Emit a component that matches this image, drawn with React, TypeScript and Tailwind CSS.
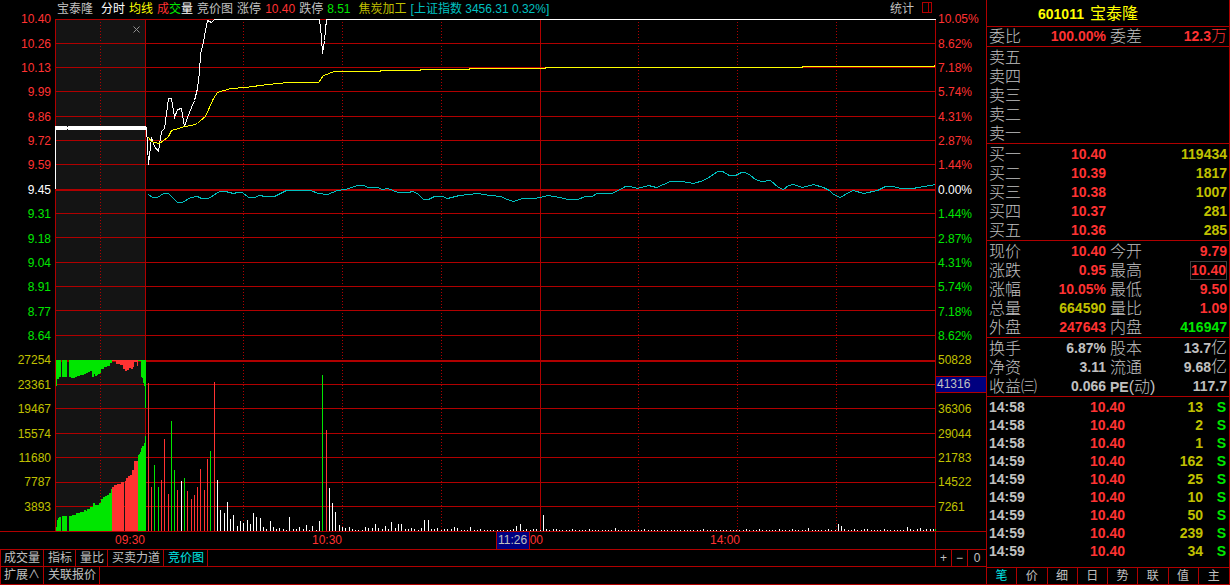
import React, { useState } from 'react';
import clsx from 'clsx';

type Point = [number, number];
type Bar = [number, number, string?];

const RED = '#ff3232';
const GREEN = '#00e600';
const LINE = '#b00000';

const LEFT_PRICES = ['10.40', '10.26', '10.13', '9.99', '9.86', '9.72', '9.59', '9.45', '9.31', '9.18', '9.04', '8.91', '8.77', '8.64'];
const LEFT_VOLUMES = ['27254', '23361', '19467', '15574', '11680', '7787', '3893'];
const RIGHT_PERCENTS = ['10.05%', '8.62%', '7.18%', '5.74%', '4.31%', '2.87%', '1.44%', '0.00%', '1.44%', '2.87%', '4.31%', '5.74%', '7.18%', '8.62%'];
const RIGHT_VOLUMES = ['50828', '41316', '36306', '29044', '21783', '14522', '7261'];

const GRID_Y = [19, 43, 67, 91, 116, 140, 164, 213, 237, 262, 286, 310, 335, 384, 408, 433, 457, 482, 506];
const DOTTED_X = [100, 243, 342, 441, 638, 737, 836];

const PRICE: Point[] = [
  [146, 127], [148, 164], [151, 137], [154, 146], [158, 151], [161, 131], [164, 128], [166, 113], [168, 98], [171, 98],
  [174, 117], [177, 109], [181, 108], [184, 126], [187, 117], [191, 107], [194, 100], [197, 88], [199, 72], [200, 53],
  [203, 42], [205, 30], [207, 20], [211, 22], [214, 19], [319, 19], [321, 37], [322, 53], [324, 40], [326, 19], [935, 19],
];

const AVERAGE: Point[] = [
  [148, 137], [151, 141], [158, 143], [162, 141], [168, 136], [171, 130], [178, 128], [184, 126], [191, 125], [197, 123],
  [200, 120], [205, 116], [213, 98], [217, 92], [230, 88], [245, 87], [267, 84], [288, 82], [318, 82], [323, 75],
  [334, 71], [380, 71], [380, 70], [420, 70], [420, 69], [469, 69], [469, 68], [545, 68], [545, 67], [802, 67],
  [802, 66], [933, 66], [935, 65],
];

const INDEX: Point[] = [
  [148, 194], [152, 197], [157, 197], [163, 193], [168, 193], [177, 202], [182, 202], [190, 197], [197, 196], [201, 198],
  [208, 198], [219, 191], [225, 191], [233, 193], [237, 192], [242, 192], [248, 197], [254, 197], [259, 195], [265, 196],
  [274, 196], [286, 190], [310, 190], [318, 193], [327, 194], [337, 190], [345, 189], [357, 185], [363, 185], [368, 187],
  [377, 187], [382, 189], [387, 188], [398, 192], [408, 192], [412, 191], [417, 193], [423, 199], [428, 199], [434, 196],
  [442, 196], [447, 198], [459, 195], [477, 193], [490, 195], [500, 196], [507, 199], [513, 201], [522, 198], [533, 198],
  [540, 197], [547, 195], [560, 197], [567, 199], [577, 199], [585, 196], [592, 196], [596, 193], [611, 193], [618, 190],
  [625, 186], [630, 186], [637, 188], [648, 185], [656, 187], [670, 181], [682, 181], [693, 183], [703, 180], [710, 176],
  [717, 171], [722, 171], [729, 175], [735, 175], [741, 172], [745, 172], [750, 175], [755, 179], [761, 181], [770, 180],
  [778, 187], [783, 189], [788, 185], [793, 184], [802, 187], [813, 184], [823, 187], [829, 190], [833, 194], [840, 197],
  [848, 192], [853, 190], [863, 193], [877, 190], [885, 186], [893, 186], [900, 188], [912, 188], [930, 185], [935, 184],
];

// Call auction steps: [x, edge y]. A step runs to the next x; edge 0 leaves a gap.
const UNMATCHED: Point[] = [
  [56, 386], [57, 379], [59, 377], [61, 0], [62, 377], [67, 0], [69, 377], [71, 378], [75, 377], [77, 376], [80, 375],
  [84, 374], [86, 373], [88, 372], [90, 371], [92, 377], [94, 374], [95, 376], [97, 375], [98, 374], [100, 373],
  [101, 369], [104, 367], [107, 366], [110, 363], [112, 361], [116, 364], [120, 365], [123, 369], [125, 371], [127, 370],
  [129, 368], [131, 369], [133, 367], [134, 362], [137, 366], [138, 361], [141, 377], [142, 378], [143, 383], [144, 386],
  [145, 408], [146, 0],
];
const MATCHED: Point[] = [
  [56, 527], [57, 520], [58, 518], [59, 517], [61, 0], [62, 516], [67, 0], [69, 516], [72, 515], [76, 513], [80, 512],
  [84, 510], [86, 511], [87, 509], [90, 507], [93, 503], [95, 505], [99, 503], [101, 499], [103, 497], [105, 496],
  [107, 495], [109, 493], [111, 489], [112, 487], [114, 485], [117, 484], [121, 482], [124, 0], [125, 481], [126, 478],
  [128, 476], [130, 475], [132, 470], [134, 461], [138, 455], [139, 454], [140, 452], [141, 448], [142, 446], [144, 443],
  [145, 436], [146, 0],
];

const VOLUME: Bar[] = [
  [148, 383, RED], [151, 487, RED], [154, 465, GREEN], [158, 487, GREEN], [161, 480, RED], [164, 439, RED], [168, 494, RED],
  [171, 421, GREEN], [174, 470, GREEN], [177, 490, RED], [181, 481], [184, 478, GREEN], [187, 491, RED], [191, 499, RED],
  [194, 495, RED], [197, 487, RED], [200, 469, RED], [204, 490, RED], [207, 459, RED], [210, 451, GREEN], [214, 382, RED],
  [217, 480], [220, 510], [224, 513], [227, 502], [230, 519], [233, 515], [237, 526], [240, 521], [243, 523], [247, 520],
  [250, 524], [253, 513], [256, 517], [260, 518], [263, 527], [266, 529], [270, 521], [273, 527], [276, 529], [279, 528],
  [283, 529], [286, 530], [289, 517], [293, 529], [296, 529], [299, 527], [303, 529], [306, 525], [309, 530], [312, 526],
  [316, 530], [319, 521], [322, 375, GREEN], [326, 430, RED], [329, 488], [332, 503], [335, 512], [339, 525], [342, 527],
  [345, 528], [349, 527], [352, 529], [355, 530], [358, 530], [362, 530], [365, 527], [368, 528], [372, 528], [375, 524],
  [378, 528], [382, 529], [385, 526], [388, 529], [391, 522], [395, 528], [398, 524], [401, 524], [405, 529], [408, 529],
  [411, 528], [414, 529], [418, 530], [421, 528], [424, 520], [428, 520], [431, 529], [434, 529], [437, 528], [441, 530],
  [444, 529], [447, 529], [451, 529], [454, 527], [457, 528], [461, 530], [464, 530], [467, 530], [470, 527], [474, 530],
  [477, 530], [480, 529], [484, 530], [487, 530], [490, 530], [493, 530], [497, 530], [500, 530], [503, 530], [507, 530],
  [510, 530], [513, 529], [516, 526], [520, 524], [523, 530], [526, 529], [530, 530], [533, 529], [536, 529], [540, 530],
  [543, 515], [546, 529], [549, 530], [553, 529], [556, 529],
];

// Quiet afternoon: one unit bars with a few taller minutes.
const TALLER: Record<number, number> = {
  4: 529, 9: 529, 17: 528, 26: 529, 44: 529, 57: 529, 61: 529, 67: 529, 71: 529, 76: 528, 82: 529, 85: 524, 86: 526, 87: 529,
  90: 529, 93: 529, 94: 529, 99: 529, 106: 527, 107: 529, 109: 529, 110: 528, 112: 529, 113: 529, 114: 529,
};
const AFTERNOON: Bar[] = Array.from({ length: 115 }, (_, i) => [Math.round(559 + i * 3.28), TALLER[i] ?? 530]);

const toPoints = (pts: Point[]) => pts.map(([x, y]) => `${x + 0.5},${y + 0.5}`).join(' ');
const auctionColor = (x: number) => (x >= 112 && x < 138 ? RED : GREEN);

function Chart() {
  return (
    <svg viewBox="55 19 881 512" preserveAspectRatio="none" shapeRendering="crispEdges" className="block h-[512px] w-full" aria-label="分时走势">
      <rect x="55" y="19" width="91" height="512" fill="#141414" />
      {DOTTED_X.map((x) => (
        <line key={x} x1={x + 0.5} x2={x + 0.5} y1="22" y2="531" stroke={LINE} strokeDasharray="1 2" />
      ))}
      {GRID_Y.map((y) => (
        <rect key={y} x="55" y={y} width="881" height="1" fill={LINE} />
      ))}
      <rect x="55" y="189" width="881" height="2" fill={LINE} />
      <rect x="55" y="360" width="881" height="2" fill={LINE} />
      {[55, 145, 540, 935].map((x) => (
        <rect key={x} x={x} y="19" width="1" height="512" fill={LINE} />
      ))}

      {/* Call auction */}
      {UNMATCHED.map(([x, y], i) =>
        y ? <rect key={x} x={x} y="360" width={UNMATCHED[i + 1][0] - x} height={y - 360} fill={auctionColor(x)} /> : null
      )}
      {MATCHED.map(([x, y], i) =>
        y ? <rect key={x} x={x} y={y} width={MATCHED[i + 1][0] - x} height={531 - y} fill={auctionColor(x)} /> : null
      )}
      <path d="M55 128h1v61h-1zM55 126h12v4H55zM67 127h1v2h-1zM68 126h78v4H68zM146 127h1v2h-1z" fill="#fff" />

      {/* Volume */}
      {[...VOLUME, ...AFTERNOON].map(([x, y, color]) => (
        <rect key={x} x={x} y={y} width="1" height={531 - y} fill={color ?? '#fff'} />
      ))}
      <rect x="935" y="529" width="1" height="2" fill={GREEN} />

      <polyline points={toPoints(INDEX)} fill="none" stroke="#00c0c0" />
      <polyline points={toPoints(PRICE)} fill="none" stroke="#fff" />
      <polyline points={toPoints(AVERAGE)} fill="none" stroke="#ffff00" />
    </svg>
  );
}

function priceColor(i: number) {
  if (i === 7) return 'text-white';
  return i < 7 ? 'text-[#ff3232]' : 'text-[#00e600]';
}

function Header() {
  return (
    <header className="flex h-[19px] items-start gap-1 whitespace-nowrap pl-[57px] pr-[53px] leading-[18px] text-[#c0c0c0]">
      <span>宝泰隆</span>
      <span className="ml-1 text-white">分时</span>
      <span className="text-[#ffff00]">均线</span>
      <span className="text-white">
        <span className="text-[#ff3232]">成</span>
        <span className="text-[#00e600]">交</span>量
      </span>
      <span>竞价图</span>
      <span>涨停</span>
      <span className="text-[#ff3232]">10.40</span>
      <span>跌停</span>
      <span className="text-[#00e600]">8.51</span>
      <span className="ml-1 text-[#c0c000]">焦炭加工</span>
      <span className="text-[#00c0c0]">[上证指数 3456.31 0.32%]</span>
      <button type="button" className="ml-auto mr-1">统计</button>
      <button type="button" aria-label="切换侧栏" className="pt-0.5">
        <svg className="block" width="11" height="11" viewBox="0 0 11 11" shapeRendering="crispEdges" fill="none" stroke={LINE}>
          <path d="M.5 .5h9v10h-9zM6.5 0v11" />
        </svg>
      </button>
    </header>
  );
}

function Unit({ children }: { children: React.ReactNode }) {
  return <span className="text-base font-light leading-none">{children}</span>;
}

type StatProps = { label: React.ReactNode; value: string; unit?: string; color?: string; boxed?: boolean };

function Stat({ label, value, unit, color = 'text-[#c0c0c0]', boxed }: StatProps) {
  return (
    <div className="flex h-[19px] items-center justify-between whitespace-nowrap leading-[19px]">
      <dt className="text-base font-light leading-[19px]">{label}</dt>
      <dd className={clsx('text-sm font-bold leading-[17px]', color, boxed && 'border border-[#404040]')}>
        {value}
        {unit && <Unit>{unit}</Unit>}
      </dd>
    </div>
  );
}

const red = 'text-[#ff3232]';
const green = 'text-[#00e600]';
const olive = 'text-[#c0c000]';

const QUOTE: StatProps[] = [
  { label: '现价', value: '10.40', color: red },
  { label: '今开', value: '9.79', color: red },
  { label: '涨跌', value: '0.95', color: red },
  { label: '最高', value: '10.40', color: red, boxed: true },
  { label: '涨幅', value: '10.05%', color: red },
  { label: '最低', value: '9.50', color: red },
  { label: '总量', value: '664590', color: olive },
  { label: '量比', value: '1.09', color: red },
  { label: '外盘', value: '247643', color: red },
  { label: '内盘', value: '416947', color: green },
];

const FINANCE: StatProps[] = [
  { label: '换手', value: '6.87%' },
  { label: '股本', value: '13.7', unit: '亿' },
  { label: '净资', value: '3.11' },
  { label: '流通', value: '9.68', unit: '亿' },
  { label: '收益㈢', value: '0.066' },
  { label: <><span className="text-sm font-bold">PE</span>(动)</>, value: '117.7' },
];

const SELLS = [['卖五', '', ''], ['卖四', '', ''], ['卖三', '', ''], ['卖二', '', ''], ['卖一', '', '']];
const BUYS = [
  ['买一', '10.40', '119434'],
  ['买二', '10.39', '1817'],
  ['买三', '10.38', '1007'],
  ['买四', '10.37', '281'],
  ['买五', '10.36', '285'],
];

const TICKS = [
  ['14:58', '13'], ['14:58', '2'], ['14:58', '1'], ['14:59', '162'], ['14:59', '25'],
  ['14:59', '10'], ['14:59', '50'], ['14:59', '239'], ['14:59', '34'],
];

function StatList({ items }: { items: StatProps[] }) {
  return (
    <dl className="grid grid-cols-2 gap-x-1 border-t border-[#b00000] px-0.5 pt-px">
      {items.map((item) => (
        <Stat key={item.value + item.color + String(item.boxed)} {...item} />
      ))}
    </dl>
  );
}

function OrderBook({ rows }: { rows: string[][] }) {
  return (
    <div className="border-t border-[#b00000] px-0.5 pt-px">
      <table className="w-full table-fixed">
        <tbody>
          {rows.map(([label, price, volume]) => (
            <tr key={label} className="h-[19px] text-sm font-bold leading-[19px]">
              <th scope="row" className="w-10 p-0 text-left text-base font-light leading-[19px]">{label}</th>
              <td className="w-[77px] p-0 text-right text-[#ff3232]">{price}</td>
              <td className="p-0 text-right text-[#c0c000]">{volume}</td>
            </tr>
          ))}
        </tbody>
      </table>
    </div>
  );
}

const PANEL_TABS = ['笔', '价', '细', '日', '势', '联', '值', '主'];

function QuotePanel() {
  const [tab, setTab] = useState('笔');

  return (
    <aside className="flex w-[244px] shrink-0 flex-col border-x border-[#b00000] text-[#c0c0c0]">
      <h1 className="flex h-[26px] items-center gap-1.5 pl-[51px] pt-0.5 text-base text-[#ffff00]">
        <span className="text-sm font-bold">601011</span>宝泰隆
      </h1>
      <dl className="grid grid-cols-2 gap-x-1 border-t border-[#b00000] px-0.5">
        <Stat label="委比" value="100.00%" color={red} />
        <Stat label="委差" value="12.3" unit="万" color={red} />
      </dl>
      <OrderBook rows={SELLS} />
      <OrderBook rows={BUYS} />
      <StatList items={QUOTE} />
      <StatList items={FINANCE} />

      <div className="flex-1 border-t border-[#b00000] px-0.5 pt-px">
        <table className="w-full table-fixed text-sm font-bold leading-[18px]">
          <tbody>
            {TICKS.map(([time, volume], i) => (
              <tr key={i} className="h-[18px]">
                <td className="w-12 p-0">{time}</td>
                <td className="w-[88px] p-0 text-right text-[#ff3232]">10.40</td>
                <td className="p-0 text-right text-[#c0c000]">{volume}</td>
                <td className="w-6 p-0 pr-px text-right text-[#00e600]">S</td>
              </tr>
            ))}
          </tbody>
        </table>
      </div>

      <nav className="grid h-[18px] grid-cols-8 border-y border-[#b00000] text-xs leading-4">
        {PANEL_TABS.map((name) => (
          <button
            key={name}
            type="button"
            onClick={() => setTab(name)}
            className={clsx('border-r border-[#b00000] last:border-r-0', tab === name && 'text-[#00e6e6]')}
          >
            {name}
          </button>
        ))}
      </nav>
    </aside>
  );
}

const INDICATORS = ['成交量', '指标', '量比', '买卖力道', '竞价图'];

export default function App() {
  const [indicator, setIndicator] = useState('竞价图');
  const [auction, setAuction] = useState(true);
  const tabClass = 'border-r border-[#b00000] pl-1 pr-[3px] first:pl-[3px]';

  return (
    <div className="flex min-h-screen bg-black font-['Liberation_Sans','Noto_Sans_CJK_SC',sans-serif] text-xs">
      <main className="flex min-w-0 flex-1 flex-col text-[#c0c0c0]">
        <Header />

        <div className="flex">
          {/* Price and volume scale, labels centred on the grid lines */}
          <div className="-mt-3 mb-3 flex w-[55px] flex-col pr-1 text-right">
            {LEFT_PRICES.map((p, i) => (
              <span key={p} className={clsx('flex flex-1 items-center justify-end', priceColor(i))}>{p}</span>
            ))}
            {LEFT_VOLUMES.map((v) => (
              <span key={v} className="flex flex-1 items-center justify-end text-[#c0c000]">{v}</span>
            ))}
          </div>

          <div className="relative min-w-0 flex-1">
            <Chart />
            {auction && (
              <button
                type="button"
                aria-label="关闭竞价图"
                onClick={() => setAuction(false)}
                className="absolute left-[78px] top-[7px]"
              >
                <svg className="block" width="7" height="7" viewBox="0 0 7 7" stroke="#909090" fill="none">
                  <path d="M.5 .5l6 6M6.5 .5l-6 6" />
                </svg>
              </button>
            )}
          </div>

          <div className="-mt-3 mb-3 flex w-[50px] flex-col">
            {RIGHT_PERCENTS.map((p, i) => (
              <span key={i} className={clsx('flex flex-1 items-center pl-0.5', priceColor(i))}>{p}</span>
            ))}
            {RIGHT_VOLUMES.map((v) => (
              <span key={v} className="flex flex-1 items-center text-[#c0c000]">
                {v === '41316' ? (
                  <span className="w-full border-y border-[#b00000] bg-[#000080] pl-px leading-[15px] text-[#c0c0c0]">{v}</span>
                ) : (
                  <span className="pl-0.5">{v}</span>
                )}
              </span>
            ))}
          </div>
        </div>

        {/* Time scale */}
        <div className="flex h-[18px] border-t border-[#b00000] leading-[17px] text-[#ff3232]">
          <div className="ml-[55px] grid flex-1 grid-cols-[90fr_197fr_201fr_197fr_195fr] text-right">
            <span>09:30</span>
            <span>10:30</span>
            <span className="flex justify-end">
              <span className="w-[34px] border-x border-[#b00000] bg-[#000080] text-center text-[#c0c0c0]">11:26</span>
              <span>00</span>
            </span>
            <span>14:00</span>
          </div>
          <div className="w-[51px] border-l border-[#b00000]" />
        </div>

        <div className="flex h-[17px] border-l border-t border-[#b00000] leading-4">
          {INDICATORS.map((name) => (
            <button
              key={name}
              type="button"
              onClick={() => setIndicator(name)}
              className={clsx(tabClass, indicator === name && 'text-[#00e6e6]')}
            >
              {name}
            </button>
          ))}
          <div className="ml-auto flex w-[51px] border-l border-[#b00000]">
            <button type="button" className="w-4 border-r border-[#b00000]">+</button>
            <button type="button" className="w-4 border-r border-[#b00000]">−</button>
            <button type="button" className="flex-1">0</button>
          </div>
        </div>

        <div className="flex flex-1 border-y border-l border-[#b00000] leading-[17px]">
          <button type="button" className={tabClass}>扩展∧</button>
          <button type="button" className={tabClass}>关联报价</button>
        </div>
      </main>

      <QuotePanel />
    </div>
  );
}
